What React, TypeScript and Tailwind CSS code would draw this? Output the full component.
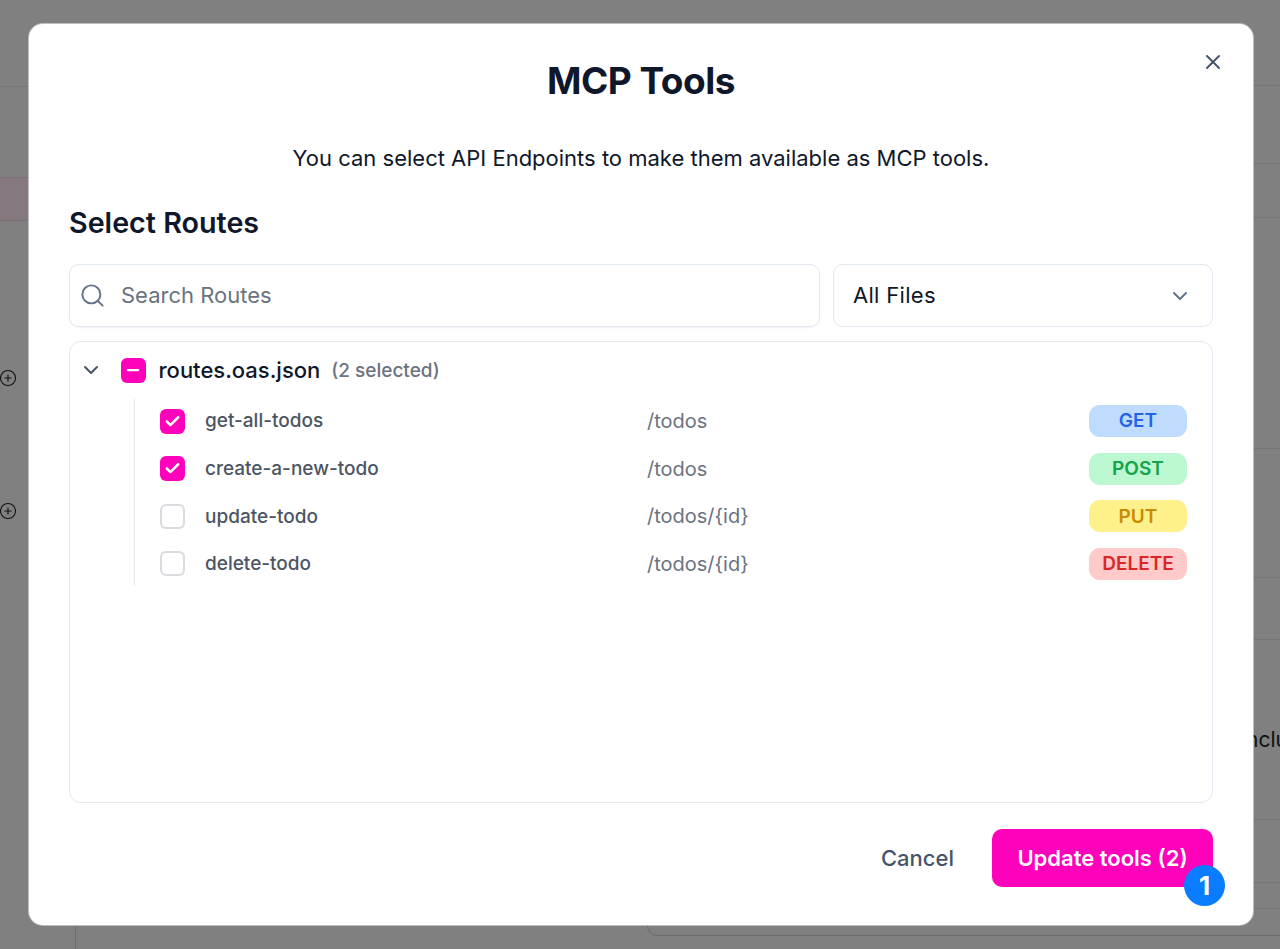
import { Check, ChevronDown, CirclePlus, Minus, Search, X } from 'lucide-react'

const routes = [
  { name: 'get-all-todos', path: '/todos', method: 'GET', checked: true, badge: 'bg-[#bfdbfe] text-[#2563eb]' },
  { name: 'create-a-new-todo', path: '/todos', method: 'POST', checked: true, badge: 'bg-[#bbf7d0] text-[#16a34a]' },
  { name: 'update-todo', path: '/todos/{id}', method: 'PUT', checked: false, badge: 'bg-[#fef08a] text-[#ca8a04]' },
  { name: 'delete-todo', path: '/todos/{id}', method: 'DELETE', checked: false, badge: 'bg-[#fecaca] text-[#dc2626]' },
]

function PageBehind() {
  return (
    <div className="absolute inset-0 overflow-hidden">
      {/* left side */}
      <div className="absolute left-0 top-[86px] h-px w-[29px] bg-[#757575]" />
      <div className="absolute left-0 top-[177px] h-[44px] w-[29px] border-y border-[#7a6f75] bg-[#85797f]" />
      <CirclePlus className="absolute left-[-1px] top-[369px] h-[18px] w-[18px] text-[#111]" strokeWidth={1.5} />
      <CirclePlus className="absolute left-[-1px] top-[502px] h-[18px] w-[18px] text-[#111]" strokeWidth={1.5} />
      <div className="absolute left-[75px] top-[925px] h-[24px] w-px bg-[#6e6e6e]" />
      {/* right side */}
      <div className="absolute right-0 top-[85px] h-px w-[27px] bg-[#757575]" />
      <div className="absolute right-0 top-[163px] h-px w-[27px] bg-[#757575]" />
      <div className="absolute right-0 top-[217px] h-px w-[27px] bg-[#757575]" />
      <div className="absolute right-0 top-[448px] h-px w-[27px] bg-[#757575]" />
      <div className="absolute right-0 top-[577px] h-px w-[27px] bg-[#757575]" />
      <div className="absolute right-0 top-[639px] h-px w-[27px] bg-[#757575]" />
      <div className="absolute right-0 top-[819px] h-px w-[27px] bg-[#757575]" />
      <div className="absolute right-0 top-[882px] h-px w-[27px] bg-[#757575]" />
      <div className="absolute right-0 top-[908px] h-px w-[27px] bg-[#757575]" />
      <div className="absolute left-[647px] right-0 top-[905px] h-[31px] rounded-bl-[10px] border-b border-l border-[#6e6e6e]" />
      <div className="absolute left-[1246px] top-[727px] w-[34px] overflow-hidden whitespace-nowrap text-[21px] leading-[26px] text-[#111]">
        nclu
      </div>
    </div>
  )
}

export default function App() {
  return (
    <div className="relative h-[949px] overflow-hidden bg-[#808080] font-['Inter',sans-serif]">
      <PageBehind />
      <div className="relative ml-[29px] mt-[24px] inline-block h-[901px] w-[1224px] rounded-[14px] bg-white px-[40px] align-top shadow-[0_0_0_1px_rgba(226,232,240,0.6)]">
        <button className="absolute right-[28px] top-[26px] text-[#475569]">
          <X className="h-[24px] w-[24px]" strokeWidth={2} />
        </button>

        <h1 className="pt-[33px] text-center text-[37px] font-bold leading-[48px] tracking-[-0.5px] text-[#0f172a]">
          MCP Tools
        </h1>
        <p className="mt-[39px] text-center text-[22px] leading-[28px] text-[#0f172a]">
          You can select API Endpoints to make them available as MCP tools.
        </p>
        <h2 className="mt-[33px] text-[28.7px] font-semibold leading-[36px] text-[#0f172a]">Select Routes</h2>

        {/* search + file filter */}
        <div className="mt-[23px] flex gap-[13px]">
          <div className="flex h-[63px] flex-1 items-center rounded-[10px] border-[1.5px] border-[#e2e8f0] pl-[9px] shadow-[0_1px_2px_rgba(0,0,0,0.06)]">
            <Search className="h-[27px] w-[27px] text-[#64748b]" strokeWidth={1.75} />
            <span className="ml-[15px] text-[22px] text-[#6b7280]">Search Routes</span>
          </div>
          <div className="flex h-[63px] w-[380px] items-center justify-between rounded-[10px] border-[1.5px] border-[#e2e8f0] pl-[19px] pr-[20px]">
            <span className="text-[22px] tracking-[0.3px] text-[#0f172a]">All Files</span>
            <ChevronDown className="h-[24px] w-[24px] text-[#64748b]" strokeWidth={2} />
          </div>
        </div>

        {/* route tree */}
        <div className="mt-[14px] h-[462px] rounded-[12px] border-[1.5px] border-[#e2e8f0] pl-[9px] pr-[25px]">
          <div className="mb-px flex h-[56px] items-center">
            <ChevronDown className="h-[24px] w-[24px] text-[#475569]" strokeWidth={2} />
            <span className="ml-[17.5px] flex h-[25px] w-[25px] items-center justify-center rounded-[6px] bg-[#ff00bb] text-white">
              <Minus className="h-[18px] w-[18px]" strokeWidth={3} />
            </span>
            <span className="ml-[13px] text-[22px] font-medium text-[#0f172a]">routes.oas.json</span>
            <span className="ml-[11px] pt-[2px] text-[19px] font-medium text-[#6b7280]">(2 selected)</span>
          </div>
          <div className="ml-[55px] flex flex-col gap-[3.67px] border-l-[1.5px] border-[#e2e8f0] pl-[25px]">
            {routes.map((route) => (
              <div key={route.name} className="flex h-[44px] items-center">
                {route.checked ? (
                  <span className="flex h-[25px] w-[25px] items-center justify-center rounded-[6px] bg-[#ff00bb] text-white">
                    <Check className="h-[17px] w-[17px]" strokeWidth={3.5} />
                  </span>
                ) : (
                  <span className="h-[25px] w-[25px] rounded-[6px] border-2 border-[#d8dbe0]" />
                )}
                <span className="ml-[20px] w-[442px] pt-px text-[19px] font-medium text-[#4b5563]">{route.name}</span>
                <span className="flex-1 text-[20px] text-[#6b7280]">{route.path}</span>
                <span
                  className={`flex h-[32px] w-[98px] items-center justify-center rounded-[11px] pt-px text-[19px] font-semibold ${route.badge}`}
                >
                  {route.method}
                </span>
              </div>
            ))}
          </div>
        </div>

        {/* footer */}
        <div className="mt-[26px] flex items-center justify-end">
          <button className="mr-[38px] text-[22px] font-medium text-[#475569]">Cancel</button>
          <div className="relative">
            <button className="h-[58px] w-[221px] rounded-[10px] bg-[#ff00bb] text-[22px] font-semibold text-white">
              Update tools (2)
            </button>
            <span className="absolute left-[192px] top-[36px] flex h-[41px] w-[41px] items-center justify-center rounded-full bg-[#0a7cff] text-[26px] font-bold text-white">
              1
            </span>
          </div>
        </div>
      </div>
    </div>
  )
}
